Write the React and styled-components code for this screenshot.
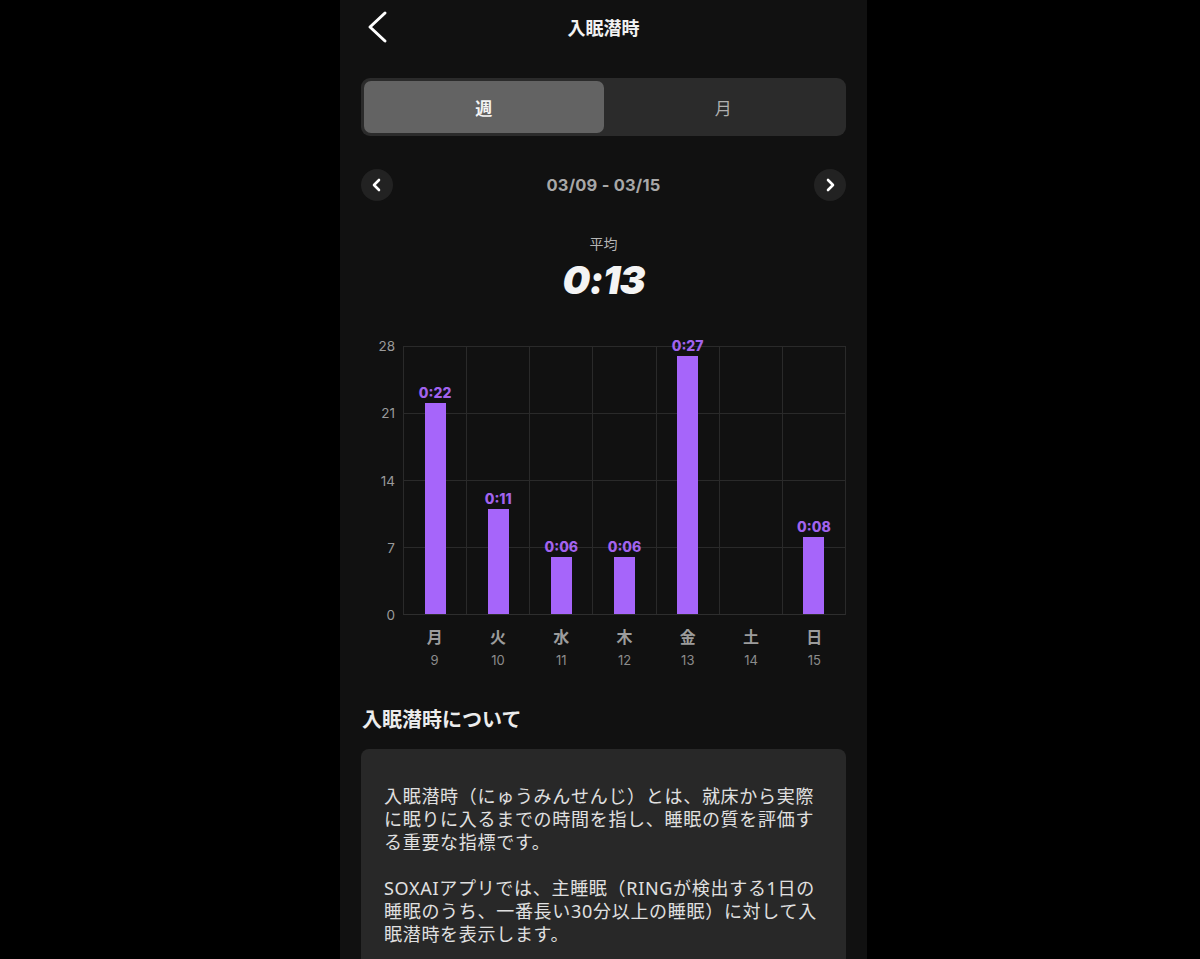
import React from "react";
import styled, { createGlobalStyle } from "styled-components";

const GlobalStyle = createGlobalStyle`
  html, body {
    margin: 0;
    padding: 0;
    background: #000;
  }
  body {
    font-family: Inter, "Noto Sans CJK JP", sans-serif;
    color: #eee;
  }
`;

const Page = styled.div`
  display: flex;
  padding-left: 340px;
`;

const Phone = styled.div`
  width: 527px;
  height: 959px;
  overflow: hidden;
  background: #111111;
  padding: 0 21px;
  box-sizing: border-box;
  display: flex;
  flex-direction: column;

  & > * {
    flex-shrink: 0;
  }
`;

const Header = styled.div`
  height: 54px;
  display: grid;
  grid-template-columns: 1fr auto 1fr;
  align-items: center;
`;

const BackButton = styled.button`
  justify-self: start;
  background: none;
  border: none;
  padding: 0;
  margin-left: 6px;
  display: flex;
`;

const Title = styled.h1`
  margin: 0;
  font-size: 18px;
  font-weight: 700;
  color: #f2f2f2;
  font-family: "Noto Sans CJK JP", sans-serif;
`;

const Segmented = styled.div`
  margin-top: 24px;
  height: 58px;
  box-sizing: border-box;
  padding: 3px;
  border-radius: 9px;
  background: #2b2b2b;
  display: grid;
  grid-template-columns: 1fr 1fr;
`;

const SegButton = styled.div`
  display: flex;
  align-items: center;
  justify-content: center;
  border-radius: 7px;
  font-family: "Noto Sans CJK JP", sans-serif;
  font-size: 17px;
  font-weight: ${(p) => (p.$active ? 700 : 400)};
  color: ${(p) => (p.$active ? "#f4f4f4" : "#b0b0b0")};
  background: ${(p) => (p.$active ? "#636363" : "transparent")};
`;

const DateNav = styled.div`
  margin-top: 33px;
  height: 32px;
  display: flex;
  align-items: center;
  justify-content: space-between;
`;

const RoundButton = styled.div`
  width: 32px;
  height: 32px;
  border-radius: 50%;
  background: #222222;
  display: flex;
  align-items: center;
  justify-content: center;
`;

const DateText = styled.div`
  font-size: 16.5px;
  font-weight: 700;
  color: #a8a8a8;
  letter-spacing: 0.2px;
`;

const Summary = styled.div`
  margin-top: 32px;
  display: flex;
  flex-direction: column;
  align-items: center;
`;

const SummaryLabel = styled.div`
  font-family: "Noto Sans CJK JP", sans-serif;
  font-size: 14px;
  color: #b5b5b5;
  line-height: 20px;
`;

const SummaryValue = styled.div`
  margin-top: 5px;
  font-size: 39px;
  font-weight: 900;
  font-style: italic;
  color: #f4f4f4;
  line-height: 44px;
  letter-spacing: -1px;
`;

const Chart = styled.div`
  margin-top: 44px;
  display: grid;
  grid-template-columns: 42px 1fr;
  grid-template-rows: 269px auto;
`;

const YAxis = styled.div`
  display: flex;
  flex-direction: column;
  justify-content: space-between;
  align-items: flex-end;
  padding-right: 8px;
`;

const YTick = styled.div`
  height: 0;
  display: flex;
  align-items: center;
  font-size: 13.5px;
  color: #9a9a9a;
`;

const Plot = styled.div`
  height: 269px;
  box-sizing: border-box;
  display: grid;
  grid-template-columns: repeat(7, 1fr);
  grid-template-rows: 100%;
  border-right: 1px solid #2a2a2a;
  border-bottom: 1px solid #2e2e2e;
  background-image: linear-gradient(#2a2a2a 1px, transparent 1px);
  background-size: 100% 25%;
`;

const Column = styled.div`
  min-height: 0;
  border-left: 1px solid #2a2a2a;
  display: flex;
  flex-direction: column;
  justify-content: flex-end;
  align-items: center;
`;

const BarLabel = styled.div`
  font-size: 14px;
  font-weight: 800;
  color: #a263ee;
  line-height: 16px;
  margin-bottom: 2px;
`;

const Bar = styled.div`
  flex-shrink: 0;
  width: 21px;
  background: #a665fa;
`;

const XAxis = styled.div`
  grid-column: 2;
  display: grid;
  grid-template-columns: repeat(7, 1fr);
  padding-top: 10px;
`;

const XTick = styled.div`
  display: flex;
  flex-direction: column;
  align-items: center;
`;

const DayName = styled.div`
  font-family: "Noto Sans CJK JP", sans-serif;
  font-size: 16px;
  font-weight: 700;
  color: #9c9c9c;
  line-height: 22px;
`;

const DayNum = styled.div`
  font-size: 13px;
  color: #8c8c8c;
  line-height: 18px;
  margin-top: 4px;
`;

const SectionTitle = styled.h2`
  margin: 36px 0 0 1px;
  font-family: "Noto Sans CJK JP", sans-serif;
  font-size: 20px;
  font-weight: 700;
  color: #ececec;
  line-height: 28px;
`;

const InfoCard = styled.div`
  margin-top: 16px;
  flex: 1 0 auto;
  background: #282828;
  border-radius: 8px 8px 0 0;
  padding: 36px 20px 0 23px;
`;

const InfoText = styled.p`
  margin: 0 0 23px;
  font-family: "Noto Sans", "Noto Sans CJK JP", sans-serif;
  font-size: 18px;
  letter-spacing: 0.7px;
  line-height: 23px;
  color: #e0e0e0;
  white-space: nowrap;
`;

const ChevronLeftBig = () => (
  <svg width="22" height="34" viewBox="0 0 22 34">
    <polyline
      points="18,3 3,17 18,31"
      fill="none"
      stroke="#ffffff"
      strokeWidth="3"
      strokeLinecap="round"
      strokeLinejoin="round"
    />
  </svg>
);

const SmallChevron = ({ dir }) => (
  <svg width="12" height="14" viewBox="0 0 12 14">
    <polyline
      points={dir === "left" ? "8,2 3,7 8,12" : "4,2 9,7 4,12"}
      fill="none"
      stroke="#ffffff"
      strokeWidth="2.6"
      strokeLinecap="round"
      strokeLinejoin="round"
    />
  </svg>
);

const days = [
  { name: "月", num: 9, value: 22, label: "0:22" },
  { name: "火", num: 10, value: 11, label: "0:11" },
  { name: "水", num: 11, value: 6, label: "0:06" },
  { name: "木", num: 12, value: 6, label: "0:06" },
  { name: "金", num: 13, value: 27, label: "0:27" },
  { name: "土", num: 14, value: 0, label: null },
  { name: "日", num: 15, value: 8, label: "0:08" },
];

const PX_PER_MIN = 268 / 28;

export default function App() {
  return (
    <>
      <GlobalStyle />
      <Page>
        <Phone>
          <Header>
            <BackButton>
              <ChevronLeftBig />
            </BackButton>
            <Title>入眠潜時</Title>
            <div />
          </Header>

          <Segmented>
            <SegButton $active>週</SegButton>
            <SegButton>月</SegButton>
          </Segmented>

          <DateNav>
            <RoundButton>
              <SmallChevron dir="left" />
            </RoundButton>
            <DateText>03/09 - 03/15</DateText>
            <RoundButton>
              <SmallChevron dir="right" />
            </RoundButton>
          </DateNav>

          <Summary>
            <SummaryLabel>平均</SummaryLabel>
            <SummaryValue>0:13</SummaryValue>
          </Summary>

          <Chart>
            <YAxis>
              {[28, 21, 14, 7, 0].map((t) => (
                <YTick key={t}>{t}</YTick>
              ))}
            </YAxis>
            <Plot>
              {days.map((d) => (
                <Column key={d.num}>
                  {d.label && <BarLabel>{d.label}</BarLabel>}
                  {d.value > 0 && (
                    <Bar style={{ height: `${d.value * PX_PER_MIN}px` }} />
                  )}
                </Column>
              ))}
            </Plot>
            <XAxis>
              {days.map((d) => (
                <XTick key={d.num}>
                  <DayName>{d.name}</DayName>
                  <DayNum>{d.num}</DayNum>
                </XTick>
              ))}
            </XAxis>
          </Chart>

          <SectionTitle>入眠潜時について</SectionTitle>

          <InfoCard>
            <InfoText>
              入眠潜時（にゅうみんせんじ）とは、就床から実際
              <br />
              に眠りに入るまでの時間を指し、睡眠の質を評価す
              <br />
              る重要な指標です。
            </InfoText>
            <InfoText>
              SOXAIアプリでは、主睡眠（RINGが検出する1日の
              <br />
              睡眠のうち、一番長い30分以上の睡眠）に対して入
              <br />
              眠潜時を表示します。
            </InfoText>
          </InfoCard>
        </Phone>
      </Page>
    </>
  );
}
